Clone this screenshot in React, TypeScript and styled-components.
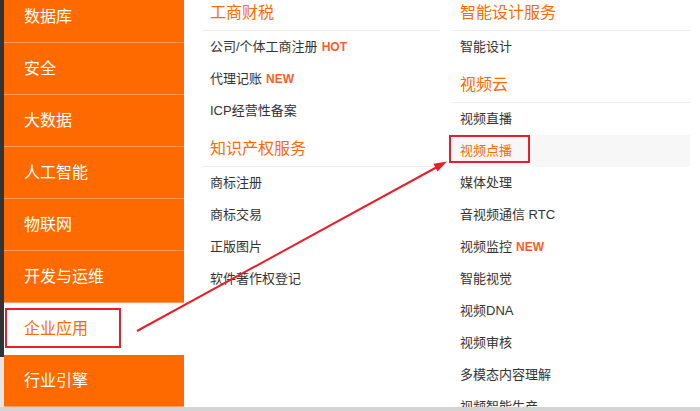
import React from "react";
import styled, { createGlobalStyle } from "styled-components";

const GlobalStyle = createGlobalStyle`
  html, body { margin: 0; padding: 0; background: #fff; }
  body { font-family: "Liberation Sans", "Noto Sans CJK SC", sans-serif; overflow: hidden; }
`;

const Page = styled.div`
  position: relative;
  width: 700px;
  height: 411px;
  overflow: hidden;
  display: flex;
  flex-direction: column;
`;

const Main = styled.div`
  flex: 1;
  overflow: hidden;
  display: flex;
`;

const Row = styled.div`
  flex: 1;
  display: flex;
  margin-top: -9px;
  align-items: flex-start;
`;

const Strip = styled.div`
  width: 4px;
  align-self: stretch;
  display: flex;
  flex-direction: column;
`;

const StripDark = styled.div`
  height: 366px;
  background: #333;
`;

const StripLight = styled.div`
  flex: 1;
  background: #e6e6e6;
`;

const Sidebar = styled.ul`
  width: 180px;
  margin: 0;
  padding: 0;
  list-style: none;
`;

const SideItem = styled.li<{ $active?: boolean }>`
  position: relative;
  height: 51px;
  line-height: 51px;
  padding-left: 20px;
  border-bottom: 1px solid ${(p) => (p.$active ? "#fff" : "#ff9a57")};
  background: ${(p) => (p.$active ? "#fff" : "#ff6a00")};
  color: ${(p) => (p.$active ? "#ff6a00" : "#fff")};
  font-size: 16px;
`;

const SideMark = styled.span`
  position: absolute;
  left: 1px;
  top: 5px;
  width: 116px;
  height: 40px;
  box-sizing: border-box;
  border: 2px solid #e5202a;
`;

const Content = styled.div`
  flex: 1;
  display: flex;
  gap: 12px;
  padding-left: 18px;
`;

const Column = styled.div`
  width: 238px;
`;

const GroupTitle = styled.div`
  padding: 12px 8px 7px;
  line-height: 20px;
  font-size: 16px;
  color: #ff6a00;
  border-bottom: 1px solid #eeeeee;
`;

const Item = styled.div<{ $active?: boolean }>`
  position: relative;
  height: 32px;
  line-height: 32px;
  padding: 0 8px;
  font-size: 13px;
  color: ${(p) => (p.$active ? "#ff6a00" : "#333")};
  background: ${(p) => (p.$active ? "#f7f7f7" : "transparent")};
  white-space: nowrap;
`;

const Tag = styled.span`
  margin-left: 4px;
  font-size: 12px;
  font-weight: bold;
  color: #ff5a2d;
`;

const ItemMark = styled.span`
  position: absolute;
  left: -3px;
  top: 0;
  width: 81px;
  height: 28px;
  box-sizing: border-box;
  border: 2px solid #e5202a;
`;

const BottomBar = styled.div`
  height: 4px;
  background: #d4d4d4;
`;

const ArrowLayer = styled.svg`
  position: absolute;
  left: 0;
  top: 0;
  pointer-events: none;
`;

type Entry = { text: string; tag?: string; active?: boolean };
type Group = { title: string; items: Entry[] };

const sideItems = ["数据库", "安全", "大数据", "人工智能", "物联网", "开发与运维", "企业应用", "行业引擎"];

const columns: Group[][] = [
  [
    {
      title: "工商财税",
      items: [
        { text: "公司/个体工商注册", tag: "HOT" },
        { text: "代理记账", tag: "NEW" },
        { text: "ICP经营性备案" },
      ],
    },
    {
      title: "知识产权服务",
      items: [{ text: "商标注册" }, { text: "商标交易" }, { text: "正版图片" }, { text: "软件著作权登记" }],
    },
  ],
  [
    { title: "智能设计服务", items: [{ text: "智能设计" }] },
    {
      title: "视频云",
      items: [
        { text: "视频直播" },
        { text: "视频点播", active: true },
        { text: "媒体处理" },
        { text: "音视频通信 RTC" },
        { text: "视频监控", tag: "NEW" },
        { text: "智能视觉" },
        { text: "视频DNA" },
        { text: "视频审核" },
        { text: "多模态内容理解" },
        { text: "视频智能生产" },
      ],
    },
  ],
];

export default function App() {
  return (
    <>
      <GlobalStyle />
      <Page>
        <Main>
          <Row>
            <Strip>
              <StripDark />
              <StripLight />
            </Strip>
            <Sidebar>
              {sideItems.map((s) => (
                <SideItem key={s} $active={s === "企业应用"}>
                  {s}
                  {s === "企业应用" && <SideMark />}
                </SideItem>
              ))}
            </Sidebar>
            <Content>
              {columns.map((groups, ci) => (
                <Column key={ci}>
                  {groups.map((g) => (
                    <div key={g.title}>
                      <GroupTitle>{g.title}</GroupTitle>
                      {g.items.map((it) => (
                        <Item key={it.text} $active={it.active}>
                          {it.text}
                          {it.tag && <Tag>{it.tag}</Tag>}
                          {it.active && <ItemMark />}
                        </Item>
                      ))}
                    </div>
                  ))}
                </Column>
              ))}
            </Content>
          </Row>
        </Main>
        <BottomBar />
        <ArrowLayer width="700" height="411" viewBox="0 0 700 411">
          <line x1="137" y1="331" x2="438" y2="166.5" stroke="#e5202a" strokeWidth="2" />
          <polygon points="447,161.5 437.6,171.5 433.4,163.8" fill="#e5202a" />
        </ArrowLayer>
      </Page>
    </>
  );
}
